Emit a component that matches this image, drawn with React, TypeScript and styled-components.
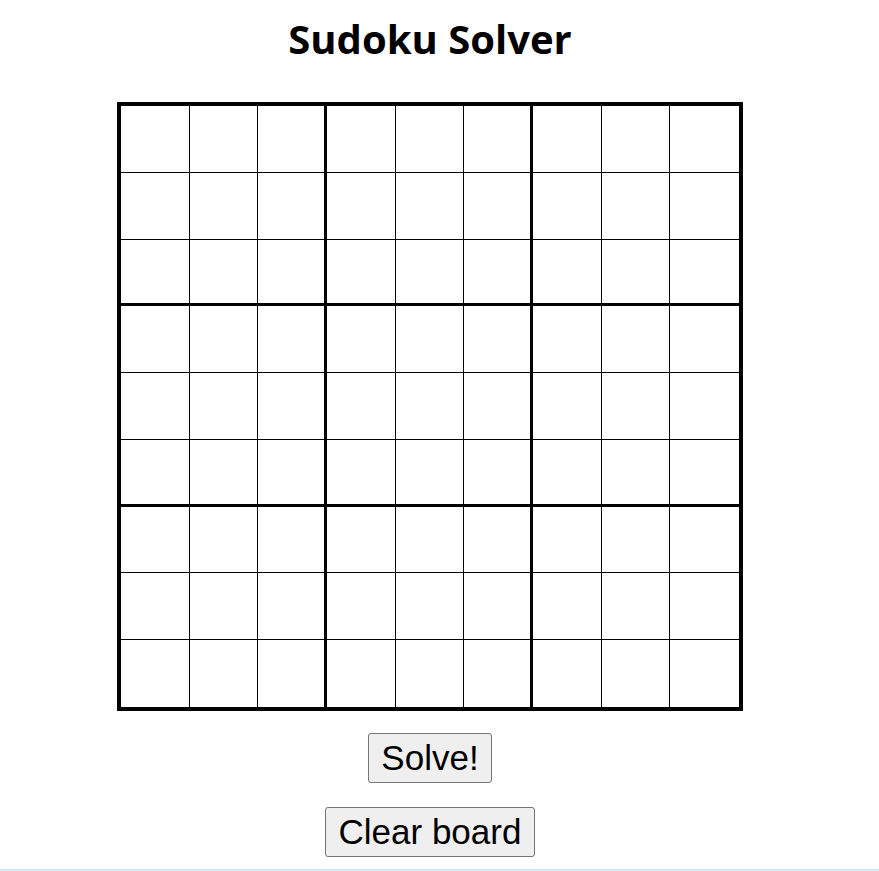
import React, { useState } from "react";
import styled, { createGlobalStyle } from "styled-components";

const GlobalStyle = createGlobalStyle`
  html, body {
    margin: 0;
    padding: 0;
    background: #ffffff;
  }
  body {
    font-family: "Liberation Sans", Arial, sans-serif;
    color: #000000;
  }
`;

const Page = styled.div`
  width: 860px;
  display: flex;
  flex-direction: column;
  align-items: center;
  padding-top: 17px;
`;

const Title = styled.h1`
  margin: 0 0 41px;
  font-family: "Open Sans", "Noto Sans", sans-serif;
  font-weight: 700;
  font-size: 40px;
  line-height: 44px;
  color: #000000;
`;

const Board = styled.div`
  box-sizing: border-box;
  width: 626px;
  height: 609px;
  border: 4px solid #000000;
  display: grid;
  grid-template-columns: repeat(9, 1fr);
  grid-template-rows: repeat(9, 1fr);
`;

const lineWidth = (i: number) => (i === 8 ? 0 : i === 2 || i === 5 ? 3 : 1);

const Cell = styled.input<{ $row: number; $col: number }>`
  box-sizing: border-box;
  min-width: 0;
  width: 100%;
  height: 100%;
  margin: 0;
  padding: 0;
  border: none;
  border-right: ${({ $col }) => lineWidth($col)}px solid #000000;
  border-bottom: ${({ $row }) => lineWidth($row)}px solid #000000;
  background: #ffffff;
  outline: none;
  text-align: center;
  font-family: "Liberation Sans", Arial, sans-serif;
  font-size: 32px;
  color: #000000;
`;

const Actions = styled.div`
  display: flex;
  flex-direction: column;
  align-items: center;
  gap: 24px;
  margin-top: 22px;
`;

const Button = styled.button`
  font-family: "Liberation Sans", Arial, sans-serif;
  font-size: 35px;
  line-height: 40px;
  padding: 4px 12.5px;
  border: 1px solid #767676;
  border-radius: 3px;
  background: #efefef;
  color: #000000;
  cursor: pointer;
`;

const BottomEdge = styled.div`
  width: 879px;
  margin-top: 12px;
  border-top: 2px solid #d3e9f5;
`;

export default function App() {
  const [cells, setCells] = useState<string[]>(() => Array(81).fill(""));

  const update = (index: number, value: string) => {
    const digit = value.replace(/[^1-9]/g, "").slice(-1);
    setCells((prev) => prev.map((c, i) => (i === index ? digit : c)));
  };

  return (
    <>
      <GlobalStyle />
      <Page>
        <Title>Sudoku Solver</Title>
        <Board>
          {cells.map((value, i) => (
            <Cell
              key={i}
              $row={Math.floor(i / 9)}
              $col={i % 9}
              value={value}
              maxLength={1}
              onChange={(e) => update(i, e.target.value)}
            />
          ))}
        </Board>
        <Actions>
          <Button type="button">Solve!</Button>
          <Button type="button" onClick={() => setCells(Array(81).fill(""))}>
            Clear board
          </Button>
        </Actions>
      </Page>
      <BottomEdge />
    </>
  );
}
